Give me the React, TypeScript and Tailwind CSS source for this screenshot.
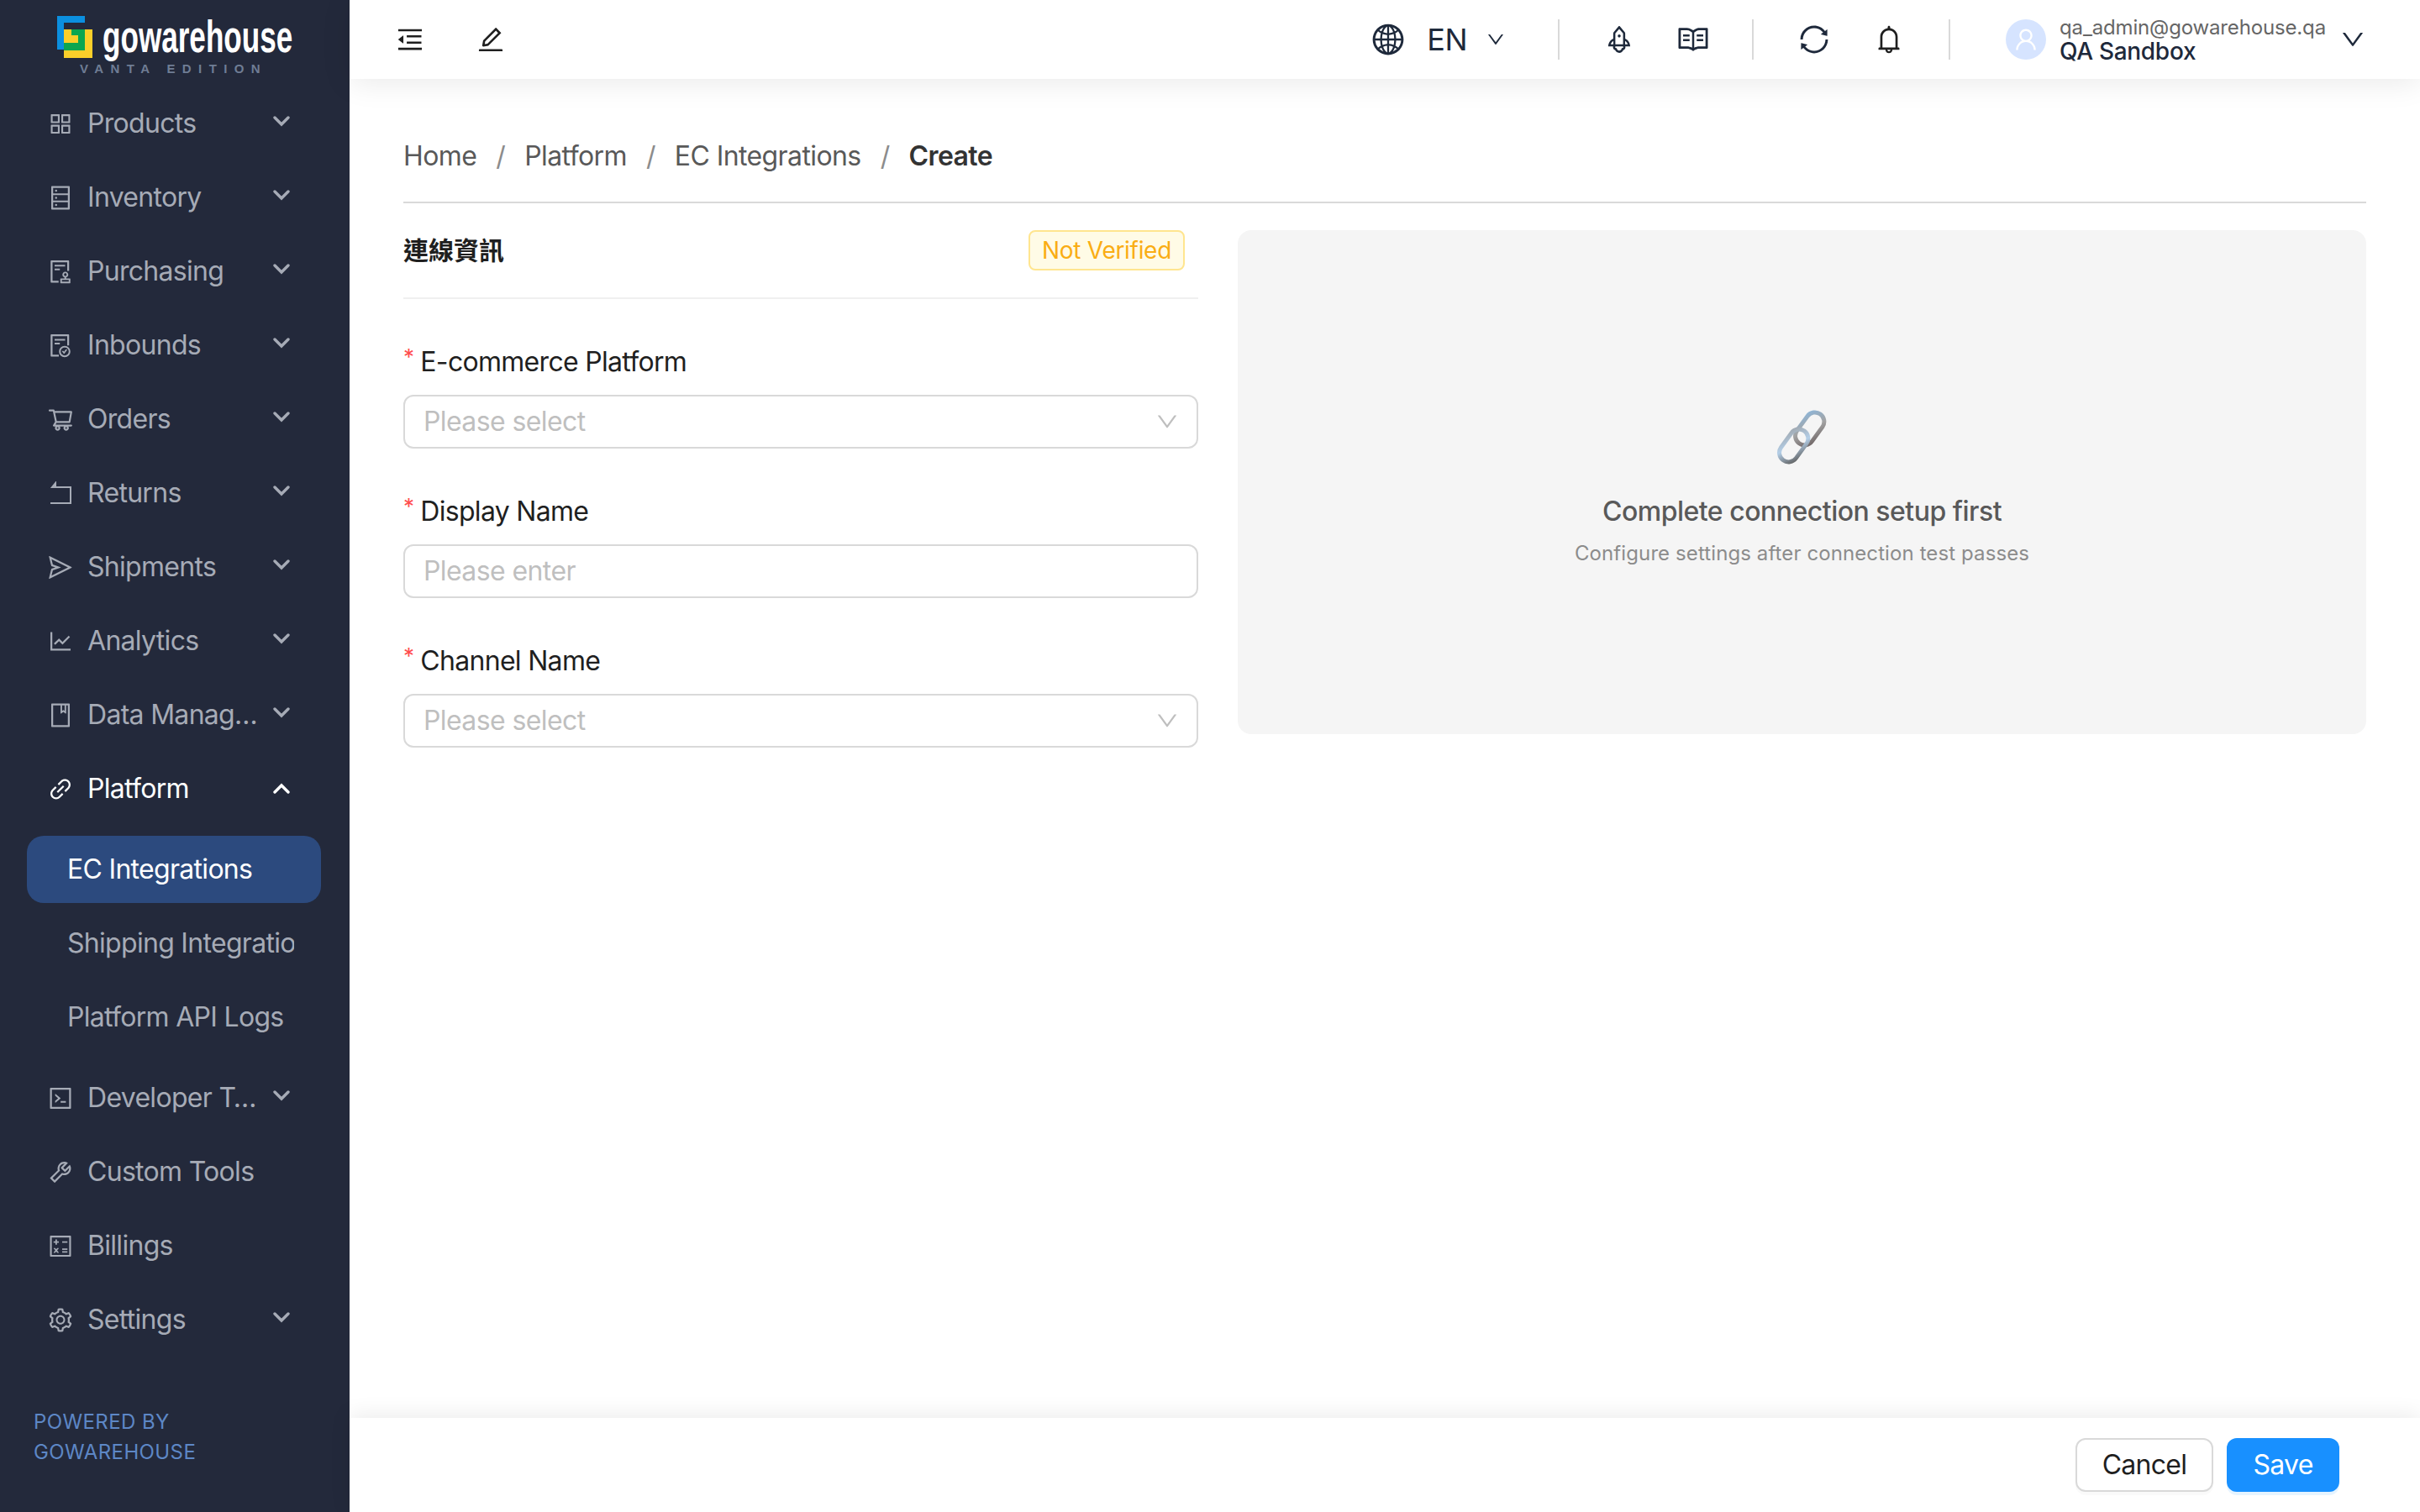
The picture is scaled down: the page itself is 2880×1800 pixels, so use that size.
import type { ReactNode } from "react";
import {
  AiOutlineAppstore,
  AiOutlineAudit,
  AiOutlineBell,
  AiOutlineBook,
  AiOutlineCalculator,
  AiOutlineCode,
  AiOutlineDatabase,
  AiOutlineDown,
  AiOutlineEdit,
  AiOutlineFileDone,
  AiOutlineGlobal,
  AiOutlineLineChart,
  AiOutlineLink,
  AiOutlineMenuFold,
  AiOutlineRead,
  AiOutlineRocket,
  AiOutlineSend,
  AiOutlineSetting,
  AiOutlineShoppingCart,
  AiOutlineSync,
  AiOutlineTool,
  AiOutlineUser,
} from "react-icons/ai";

function ReturnIcon() {
  return (
    <svg width="28" height="28" viewBox="0 0 28 28" fill="none" stroke="currentColor" strokeWidth="2">
      <path d="M2 26h24V7H7" />
      <path d="M8 2 4 7l4 0z" fill="currentColor" />
    </svg>
  );
}

function MenuArrow({ up }: { up?: boolean }) {
  return (
    <svg width="20" height="14" viewBox="0 0 20 14" fill="none" stroke="currentColor" strokeWidth="3.4" strokeLinecap="round">
      <path d={up ? "M2 11 10 3l8 8" : "M2 3l8 8 8-8"} />
    </svg>
  );
}

function MenuRow({ icon, label, arrow, active }: { icon: ReactNode; label: string; arrow?: boolean; active?: boolean }) {
  return (
    <div className={`flex h-[88px] items-center pl-[56px] ${active ? "text-white" : "text-[#a6abb6]"}`}>
      <span className="flex w-[32px] shrink-0 justify-center text-[35px]">{icon}</span>
      <span className={`ml-[16px] truncate text-[32px] tracking-[-0.7px] ${arrow ? "w-[205px]" : ""}`}>{label}</span>
      {arrow && (
        <span className={`ml-[16px] ${active ? "" : "-mt-[6px]"}`}>
          <MenuArrow up={active} />
        </span>
      )}
    </div>
  );
}

function SubRow({ label, active }: { label: string; active?: boolean }) {
  return (
    <div className={`ml-[32px] mr-[34px] mb-[8px] flex h-[80px] items-center overflow-hidden rounded-[20px] pl-[48px] pr-[32px] text-[32px] tracking-[-0.7px] whitespace-nowrap ${active ? "bg-[#2c4a7e] text-white" : "text-[#a6abb6]"}`}>
      <span className="block w-full overflow-hidden">{label}</span>
    </div>
  );
}

function Sidebar() {
  return (
    <aside className="flex h-full w-[416px] shrink-0 flex-col bg-[#23293b]">
      <div className="h-[103px] shrink-0 pl-[68px] pt-[19px]">
        <div className="flex items-start">
          <svg width="42" height="50" viewBox="0 0 42 50" className="shrink-0">
            <path d="M0 0h33v8H8v32H0z" fill="#0b8fdf" />
            <path d="M8 16h34v34H8z" fill="#fbcf2a" />
            <path d="M17 16h16v25H8v-9h17v-9h-8z" fill="#0ba650" />
            <path d="M8 16h9v7h8v9H8z" fill="#fbcf2a" />
          </svg>
          <span className="ml-[12px] mt-[-2px] inline-block origin-left scale-x-[0.65] font-['Liberation_Sans',sans-serif] text-[54px] leading-[52px] font-bold whitespace-nowrap text-white">
            gowarehouse
          </span>
        </div>
        <div className="mt-[5px] ml-[27px] font-['Liberation_Sans',sans-serif] text-[15px] leading-[16px] font-bold tracking-[8.4px] whitespace-nowrap text-[#6f7d94]">
          VANTA EDITION
        </div>
      </div>
      <MenuRow icon={<AiOutlineAppstore />} label="Products" arrow />
      <MenuRow icon={<AiOutlineDatabase />} label="Inventory" arrow />
      <MenuRow icon={<AiOutlineAudit />} label="Purchasing" arrow />
      <MenuRow icon={<AiOutlineFileDone />} label="Inbounds" arrow />
      <MenuRow icon={<AiOutlineShoppingCart />} label="Orders" arrow />
      <MenuRow icon={<ReturnIcon />} label="Returns" arrow />
      <MenuRow icon={<AiOutlineSend />} label="Shipments" arrow />
      <MenuRow icon={<AiOutlineLineChart />} label="Analytics" arrow />
      <MenuRow icon={<AiOutlineBook />} label="Data Management" arrow />
      <MenuRow icon={<AiOutlineLink />} label="Platform" arrow active />
      <div className="pt-[12px] pb-[4px]">
        <SubRow label="EC Integrations" active />
        <SubRow label="Shipping Integrations" />
        <SubRow label="Platform API Logs" />
      </div>
      <MenuRow icon={<AiOutlineCode />} label="Developer Tools" arrow />
      <MenuRow icon={<AiOutlineTool />} label="Custom Tools" />
      <MenuRow icon={<AiOutlineCalculator />} label="Billings" />
      <MenuRow icon={<AiOutlineSetting />} label="Settings" arrow />
      <div className="pl-[40px] pt-[60px] text-[24px] leading-[36px] tracking-[0.4px] text-[#5d87c6]">
        POWERED BY
        <br />
        GOWAREHOUSE
      </div>
    </aside>
  );
}

function Divider() {
  return <span className="h-[48px] w-[2px] bg-[#d9d9d9]" />;
}

function Header() {
  return (
    <header className="relative z-10 flex h-[94px] shrink-0 items-center bg-white pl-[54px] shadow-[0_4px_36px_rgba(0,0,0,0.09)]">
      <AiOutlineMenuFold className="text-[36px] text-[#1f1f1f]" />
      <AiOutlineEdit className="ml-[60px] text-[36px] text-[#1f1f1f]" />
      <div className="ml-auto flex items-center text-[#1e293b]">
        <AiOutlineGlobal className="text-[42px]" />
        <span className="ml-[25px] text-[36px] leading-none tracking-[-0.5px]">EN</span>
        <AiOutlineDown className="ml-[22px] text-[24px]" />
        <span className="ml-[62px] flex"><Divider /></span>
        <AiOutlineRocket className="ml-[52px] text-[38px]" />
        <AiOutlineRead className="ml-[49px] text-[40px]" />
        <span className="ml-[50px] flex"><Divider /></span>
        <AiOutlineSync className="ml-[52px] text-[40px]" />
        <AiOutlineBell className="ml-[50px] text-[38px] text-[#1f1f1f]" />
        <span className="ml-[52px] flex"><Divider /></span>
        <span className="ml-[66px] flex h-[48px] w-[48px] items-center justify-center rounded-full bg-[#d6e4ff] text-[32px] text-white">
          <AiOutlineUser />
        </span>
        <div className="ml-[16px] flex flex-col">
          <span className="text-[24px] leading-[28px] tracking-[-0.15px] text-[#666666]">qa_admin@gowarehouse.qa</span>
          <span className="text-[28px] leading-[28px] font-medium tracking-[-0.3px] text-[#1e293b]">QA Sandbox</span>
        </div>
        <AiOutlineDown className="ml-[16px] mr-[64px] text-[32px]" />
      </div>
    </header>
  );
}

function Crumbs() {
  return (
    <nav className="flex h-[148px] shrink-0 items-center gap-[23px] border-b-2 border-[#d9d9d9] pt-[38px] text-[32px] tracking-[-0.6px] text-[#595959]">
      <span>Home</span>
      <span className="text-[#8c8c8c]">/</span>
      <span>Platform</span>
      <span className="text-[#8c8c8c]">/</span>
      <span>EC Integrations</span>
      <span className="text-[#8c8c8c]">/</span>
      <span className="font-semibold text-[#333333]">Create</span>
    </nav>
  );
}

function Field({ label, placeholder, select }: { label: string; placeholder: string; select?: boolean }) {
  return (
    <div className="mb-[52px]">
      <div className="mb-[16px] flex h-[46px] items-center text-[32px] tracking-[-0.7px] text-[#1f1f1f]">
        <span className="mr-[8px] -mt-[14px] text-[26px] text-[#ff4d4f]">*</span>
        {label}
      </div>
      <div className="flex h-[64px] items-center justify-between rounded-[12px] border-2 border-[#d9d9d9] bg-white pl-[22px] pr-[20px] text-[32px] tracking-[-0.6px] text-[#bfbfbf]">
        <span>{placeholder}</span>
        {select && <AiOutlineDown className="text-[30px]" />}
      </div>
    </div>
  );
}

function ChainEmoji() {
  return (
    <svg width="66" height="68" viewBox="0 0 66 68" fill="none">
      <defs>
        <linearGradient id="linkA" x1="0" y1="0" x2="1" y2="1">
          <stop offset="0" stopColor="#8fb6d8" />
          <stop offset="0.5" stopColor="#a3a3a3" />
          <stop offset="1" stopColor="#6e6464" />
        </linearGradient>
        <linearGradient id="linkB" x1="0" y1="0" x2="1" y2="1">
          <stop offset="0" stopColor="#a0a8b0" />
          <stop offset="0.5" stopColor="#b4cfe8" />
          <stop offset="1" stopColor="#5f5f5f" />
        </linearGradient>
      </defs>
      <rect x="31" y="3" width="22" height="43" rx="11" transform="rotate(36 42 24)" stroke="url(#linkA)" strokeWidth="5" />
      <rect x="12" y="23" width="22" height="43" rx="11" transform="rotate(36 23 44)" stroke="url(#linkB)" strokeWidth="5" />
    </svg>
  );
}

function Content() {
  return (
    <main className="flex min-h-0 flex-1 flex-col bg-white px-[64px]">
      <Crumbs />
      <div className="grid grid-cols-[946px_1fr] gap-[47px] pt-[32px]">
        <section>
          <div className="flex h-[82px] items-start justify-between border-b-2 border-[#f0f0f0] pr-[16px]">
            <h2 className="mt-[4px] font-['Inter','Noto_Sans_CJK_TC',sans-serif] text-[30px] leading-[40px] font-semibold text-[#1f1f1f]">連線資訊</h2>
            <span className="flex h-[48px] items-center rounded-[8px] border-2 border-[#ffe58f] bg-[#fffbe6] px-[14px] text-[28px] tracking-[-0.3px] text-[#faad14]">
              Not Verified
            </span>
          </div>
          <div className="pt-[52px]">
            <Field label="E-commerce Platform" placeholder="Please select" select />
            <Field label="Display Name" placeholder="Please enter" />
            <Field label="Channel Name" placeholder="Please select" select />
          </div>
        </section>
        <section className="flex h-[600px] flex-col items-center rounded-[16px] bg-[#f5f5f5] pt-[212px]">
          <ChainEmoji />
          <div className="mt-[33px] text-[32px] leading-[44px] font-medium tracking-[-0.5px] text-[#595959]">Complete connection setup first</div>
          <div className="mt-[12px] text-[24px] leading-[32px] tracking-[0.1px] text-[#8c8c8c]">Configure settings after connection test passes</div>
        </section>
      </div>
    </main>
  );
}

function Footer() {
  return (
    <footer className="relative z-10 flex h-[112px] shrink-0 items-center justify-end gap-[16px] bg-white pr-[96px] shadow-[0_-4px_24px_rgba(0,0,0,0.08)]">
      <button className="h-[64px] w-[164px] rounded-[12px] border-2 border-[#d9d9d9] bg-white text-[32px] tracking-[-0.7px] text-[#1f1f1f] shadow-[0_4px_0_rgba(0,0,0,0.02)]">
        Cancel
      </button>
      <button className="h-[64px] w-[134px] rounded-[12px] bg-[#1890ff] text-[32px] tracking-[-0.7px] text-white shadow-[0_4px_0_rgba(5,145,255,0.1)]">
        Save
      </button>
    </footer>
  );
}

export default function App() {
  return (
    <div className="flex h-screen w-full overflow-hidden bg-white font-['Inter',sans-serif]">
      <Sidebar />
      <div className="flex min-w-0 flex-1 flex-col">
        <Header />
        <Content />
        <Footer />
      </div>
    </div>
  );
}
